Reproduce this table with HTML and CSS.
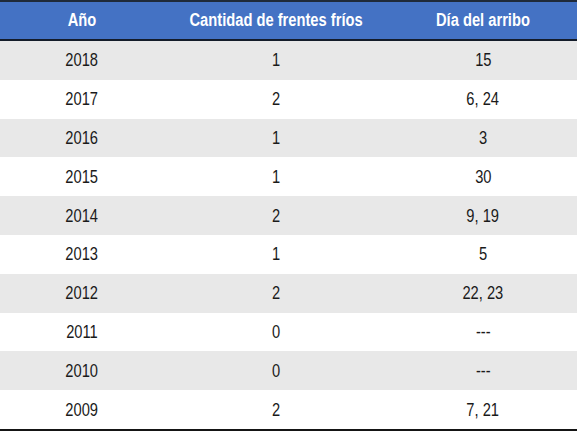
FILE: index.html
```html
<!DOCTYPE html>
<html lang="es">
<head>
<meta charset="utf-8">
<link rel="stylesheet" href="styles.css">
</head>
<body>
<table class="data">
  <colgroup><col class="c1"><col class="c2"><col class="c3"></colgroup>
  <thead>
    <tr><th><span class="n">Año</span></th><th><span class="n">Cantidad de frentes fríos</span></th><th><span class="n">Día del arribo</span></th></tr>
  </thead>
  <tbody>
    <tr><td><span class="n">2018</span></td><td><span class="n">1</span></td><td><span class="n">15</span></td></tr>
    <tr><td><span class="n">2017</span></td><td><span class="n">2</span></td><td><span class="n">6, 24</span></td></tr>
    <tr><td><span class="n">2016</span></td><td><span class="n">1</span></td><td><span class="n">3</span></td></tr>
    <tr><td><span class="n">2015</span></td><td><span class="n">1</span></td><td><span class="n">30</span></td></tr>
    <tr><td><span class="n">2014</span></td><td><span class="n">2</span></td><td><span class="n">9, 19</span></td></tr>
    <tr><td><span class="n">2013</span></td><td><span class="n">1</span></td><td><span class="n">5</span></td></tr>
    <tr><td><span class="n">2012</span></td><td><span class="n">2</span></td><td><span class="n">22, 23</span></td></tr>
    <tr><td><span class="n">2011</span></td><td><span class="n">0</span></td><td><span class="n">---</span></td></tr>
    <tr><td><span class="n">2010</span></td><td><span class="n">0</span></td><td><span class="n">---</span></td></tr>
    <tr><td><span class="n">2009</span></td><td><span class="n">2</span></td><td><span class="n">7, 21</span></td></tr>
  </tbody>
</table>
</body>
</html>
```
FILE: styles.css
```css
html, body { margin: 0; padding: 0; background: #ffffff; }
body { width: 580px; height: 432px; overflow: hidden; }
.data {
  width: 577px;
  border-collapse: collapse;
  table-layout: fixed;
  font-family: "Liberation Sans", Arial, sans-serif;
  color: #1a1a1a;
}
.c1 { width: 164px; }
.c2 { width: 225px; }
.c3 { width: 188px; }
.n { display: inline-block; white-space: nowrap; }
.data thead tr { background: #4472c4; border-top: 2px solid #1f2a3a; border-bottom: 2px solid #141c2a; }
.data th {
  height: 37px;
  padding: 0;
  font-size: 17.5px;
  font-weight: bold;
  color: #ffffff;
  text-align: center;
  vertical-align: middle;
}
.data th .n { transform: scaleX(0.84); }
.data td {
  height: 38.8px;
  padding: 0;
  font-size: 18.6px;
  text-align: center;
  vertical-align: middle;
}
.data td .n { transform: scaleX(0.79); }
.data tbody tr:nth-child(odd) { background: #e8e8e8; }
.data tbody tr:last-child { border-bottom: 2px solid #151515; }
```
